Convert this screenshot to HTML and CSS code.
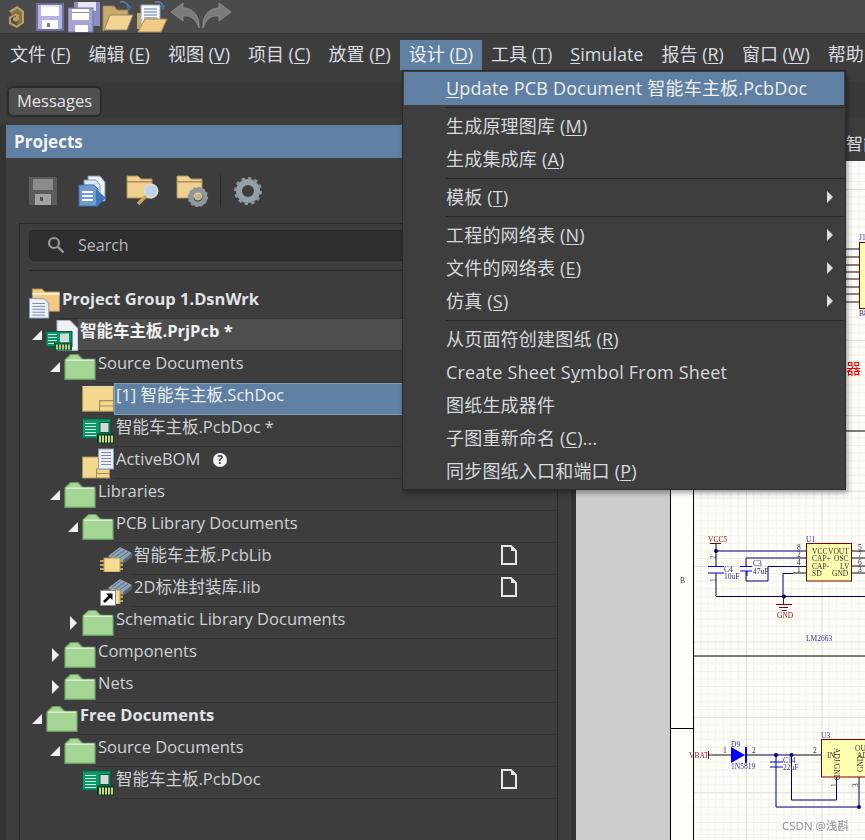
FILE: index.html
```html
<!DOCTYPE html>
<html lang="zh">
<head>
<meta charset="utf-8">
<title>Altium Designer</title>
<link rel="stylesheet" href="styles.css">
</head>
<body>
<svg class="defs" width="0" height="0" aria-hidden="true">
  <defs>
    <symbol id="i-logo" viewBox="0 0 16 22">
      <path d="M1 5 L9 0 L16 5 V17 L9 22 L1 18 V11 L8 7 L11 9 V14 L8 16 L5 14.5 V12 L8 10.5 L8 9.5 L3 12 V16.5 L9 19.5 L13.5 16 V6.5 L9 3 L3 7 Z" fill="#b79e66"/>
      <path d="M3 7 L9 3 L13.5 6.5 V16 L9 19.5 L9 17 L11 14 V9 L8 7 L3 9.5 Z" fill="#8a7342"/>
    </symbol>
    <symbol id="i-save" viewBox="0 0 28 28">
      <rect width="28" height="28" fill="#9f9fd2"/>
      <rect x="2" y="1" width="24" height="26" fill="#b4b4e0"/>
      <rect x="5" y="1" width="18" height="12" fill="#fff"/>
      <rect x="5" y="1" width="18" height="3" fill="#e4e4f4"/>
      <rect x="6" y="17" width="16" height="11" fill="#fff"/>
      <rect x="11" y="20" width="3" height="4" fill="#77779f"/>
      <path d="M0 0H28V28H0Z M2 2V26H26V2Z" fill="#6f6fa8" fill-rule="evenodd"/>
    </symbol>
    <symbol id="i-saveall" viewBox="0 0 32 32">
      <rect x="6" y="1" width="26" height="24" fill="#8e8ec6"/>
      <rect x="10" y="1" width="18" height="9" fill="#e6e6f6"/>
      <rect x="0" y="7" width="25" height="24" fill="#a4a4d6" stroke="#6f6fa8"/>
      <rect x="4" y="8" width="17" height="11" fill="#fff"/>
      <rect x="4" y="11" width="17" height="1" fill="#8a8aa8"/>
      <rect x="7" y="24" width="13" height="7" fill="#fff"/>
    </symbol>
    <symbol id="i-open" viewBox="0 0 32 32">
      <path d="M1 5H12L15 9H26V16H8L2 30H1Z" fill="#c8ab6c" stroke="#96815a"/>
      <path d="M8 14H31L25 29H2Z" fill="#f2d595" stroke="#9a8458"/>
      <path d="M18 1 C23 0 26 3 27 6" fill="none" stroke="#5d87ad" stroke-width="1.5"/>
      <path d="M24 5H30L27 10Z" fill="#3f6f9f"/>
    </symbol>
    <symbol id="i-opendoc" viewBox="0 0 32 32">
      <path d="M1 12H5V28H1Z" fill="#c8a76a"/>
      <path d="M5 4H24V24H5Z" fill="#f6f8fb" stroke="#9ba6b8"/>
      <path d="M8 8H21M8 11H21M8 14H21M8 17H21" stroke="#5878a8"/>
      <path d="M9 18H31L25 31H2Z" fill="#f3c987" stroke="#a88a58"/>
      <path d="M19 1 C24 0 26 2 27 5" fill="none" stroke="#5d87ad" stroke-width="1.5"/>
      <path d="M24 4H30L27 9Z" fill="#3f6f9f"/>
    </symbol>
    <symbol id="i-undo" viewBox="0 0 30 26">
      <path d="M13 1 L1 10 L13 19 V14 C21 13 26 17 29 26 C30 14 23 6 13 6Z" fill="#7b7b7b" stroke="#8c8c8c"/>
    </symbol>
    <symbol id="i-redo" viewBox="0 0 30 26">
      <path d="M17 1 L29 10 L17 19 V14 C9 13 4 17 1 26 C0 14 7 6 17 6Z" fill="#7b7b7b" stroke="#8c8c8c"/>
    </symbol>
    <symbol id="i-psave" viewBox="0 0 28 28">
      <rect width="28" height="28" fill="#5b5b5b"/>
      <rect x="4" y="2" width="20" height="11" fill="#8b8b8b"/>
      <rect x="6" y="17" width="16" height="11" fill="#a2a2a2"/>
      <rect x="11" y="20" width="3" height="4" fill="#555"/>
    </symbol>
    <symbol id="i-pdocs" viewBox="0 0 30 32">
      <path d="M10 1H22L27 7V26H10Z" fill="#eef2f8" stroke="#7e93b5"/>
      <path d="M6 5H18L22 10V28H6Z" fill="#dfe7f2" stroke="#7e93b5"/>
      <path d="M1 10H16L20 14V31H1Z" fill="#6f9bd0" stroke="#3f6ea8"/>
      <path d="M4 17H15M4 21H15M4 25H15" stroke="#fff" stroke-width="2"/>
      <path d="M18 14L28 23L18 32Z" fill="#3f78bd"/>
    </symbol>
    <symbol id="i-pfsearch" viewBox="0 0 34 32">
      <path d="M1 1H12L15 4H26V23H1Z" fill="#efd08f" stroke="#a88f5d"/>
      <rect x="1" y="6" width="25" height="1.5" fill="#a88f5d"/>
      <circle cx="25" cy="16" r="6.5" fill="#bcd2e6" stroke="#d8d8d8" stroke-width="2"/>
      <path d="M20 21 L12 29" stroke="#c6a263" stroke-width="3.5"/>
    </symbol>
    <symbol id="i-pfgear" viewBox="0 0 34 32">
      <path d="M1 1H12L15 4H26V23H1Z" fill="#efd08f" stroke="#a88f5d"/>
      <rect x="1" y="6" width="25" height="1.5" fill="#a88f5d"/>
      <circle cx="22" cy="22" r="7" fill="none" stroke="#8d979d" stroke-width="5"/>
      <circle cx="22" cy="22" r="9.2" fill="none" stroke="#8d979d" stroke-width="2" stroke-dasharray="2.4 2.4"/>
      <circle cx="22" cy="22" r="3.5" fill="#c8b588"/>
    </symbol>
    <symbol id="i-gear" viewBox="0 0 28 28">
      <circle cx="14" cy="14" r="9" fill="none" stroke="#95a0a6" stroke-width="6"/>
      <circle cx="14" cy="14" r="12.5" fill="none" stroke="#8b969c" stroke-width="3" stroke-dasharray="3.4 3.1"/>
    </symbol>
    <symbol id="i-search" viewBox="0 0 18 18">
      <circle cx="7" cy="7" r="5" fill="none" stroke="#9a9a9a" stroke-width="2.2"/>
      <path d="M11 11 L16.5 16.5" stroke="#9a9a9a" stroke-width="2.4"/>
    </symbol>
    <symbol id="i-group" viewBox="0 0 32 32">
      <path d="M4 1H14L17 4H32V24H4Z" fill="#f4c985" stroke="#a98a5c"/>
      <path d="M4 6H32" stroke="#fff2cf" stroke-width="2"/>
      <path d="M1 11H16L21 16V31H1Z" fill="#edf1f7" stroke="#8d9bb5"/>
      <path d="M4 16H17M4 19H17M4 22H17M4 25H17M4 28H17" stroke="#7b8aa8"/>
    </symbol>
    <symbol id="i-prj" viewBox="0 0 32 30">
      <path d="M11 0H24L32 8V30H11Z" fill="#eef1f7" stroke="#a8b4c8"/>
      <rect x="0" y="11" width="26" height="15" fill="#089466" stroke="#05583c"/>
      <path d="M2 14H11M2 17H11M2 20H11M2 23H11" stroke="#d8f4e6"/>
      <rect x="14" y="13" width="9" height="9" fill="#d4dcd8"/>
      <rect x="8" y="22" width="18" height="8" fill="#05583c"/>
      <path d="M11 24V29M14 24V29M17 24V29M20 24V29M23 24V29" stroke="#e8e28a" stroke-width="1.6"/>
    </symbol>
    <symbol id="i-folder" viewBox="0 0 30 25">
      <path d="M.5 24.5V5.5L6 .5H13L17.5 5H29.5V24.5Z" fill="#a6d695" stroke="#6d9a62"/>
      <path d="M1.5 6H28.5" stroke="#d6efca" stroke-width="1.5"/>
      <path d="M1 23.5H29" stroke="#8fbf80"/>
    </symbol>
    <symbol id="i-sch" viewBox="0 0 30 24">
      <rect x=".5" y=".5" width="29" height="23" fill="#f3d88e" stroke="#a59264"/>
      <path d="M.5 .5H29.5" stroke="#fff0c0"/>
      <path d="M16.5 23.5V13.5H29.5M16.5 18.5H29.5" fill="none" stroke="#a08a58"/>
    </symbol>
    <symbol id="i-pcb" viewBox="0 0 32 25">
      <rect x=".5" y=".5" width="28" height="19" fill="#0b9a6c" stroke="#056043"/>
      <path d="M3 5H14M3 8H14M3 11H14M3 14H14M3 17H14" stroke="#d8f4e6"/>
      <rect x="18" y="4" width="9" height="10" fill="#d4dcd8" stroke="#0a5a40"/>
      <rect x="15" y="15" width="17" height="10" fill="#043f2c"/>
      <path d="M18 17V24M21 17V24M24 17V24M27 17V24M30 17V24" stroke="#e8e28a" stroke-width="1.8"/>
    </symbol>
    <symbol id="i-bom" viewBox="0 0 32 30">
      <rect x=".5" y="8.5" width="27" height="21" fill="#f3d88e" stroke="#a59264"/>
      <path d="M14.5 29.5V20.5H27.5M14.5 25H27.5" fill="none" stroke="#a08a58"/>
      <rect x="16.5" y=".5" width="15" height="20" fill="#edf1f7" stroke="#8d9bb5"/>
      <path d="M19 4H29M19 7H29M19 10H29M19 13H29M19 16H29" stroke="#7b8aa8"/>
    </symbol>
    <symbol id="i-lib" viewBox="0 0 32 26">
      <path d="M8 10 L20 1 L32 7 L20 17Z" fill="#8ea3b8"/>
      <path d="M12 9L22 2M15 11L25 4M18 13L28 6" stroke="#5e7286"/>
      <path d="M20 17 L32 7 V11 L20 20Z" fill="#566a7c"/>
      <path d="M0 15H4M0 19H4M0 23H4M20 15H23M20 19H23M20 23H23" stroke="#c9a34e" stroke-width="2"/>
      <rect x="4" y="12" width="16" height="14" fill="#f5dc92" stroke="#b29a5a"/>
    </symbol>
    <symbol id="i-doc" viewBox="0 0 18 20">
      <path d="M2 1H11L16 6V19H2Z" fill="#3d3d3d" stroke="#e8e8e8" stroke-width="2"/>
      <path d="M11 1V6H16Z" fill="#e8e8e8"/>
    </symbol>
    <symbol id="i-shortcut" viewBox="0 0 16 16">
      <rect width="16" height="16" fill="#fff"/>
      <rect x=".5" y=".5" width="15" height="15" fill="none" stroke="#888"/>
      <path d="M4 12 L10 6" stroke="#000" stroke-width="2.6"/>
      <path d="M6 3.5H12.5V10Z" fill="#000"/>
    </symbol>
    <pattern id="grid" patternUnits="userSpaceOnUse" x="670.6" y="189" width="75.4" height="75.4">
      <path d="M7.54 0V75.4M15.08 0V75.4M22.62 0V75.4M30.16 0V75.4M37.7 0V75.4M45.24 0V75.4M52.78 0V75.4M60.32 0V75.4M67.86 0V75.4M0 7.54H75.4M0 15.08H75.4M0 22.62H75.4M0 30.16H75.4M0 37.7H75.4M0 45.24H75.4M0 52.78H75.4M0 60.32H75.4M0 67.86H75.4" stroke="#f1efe9" stroke-width="1"/>
      <path d="M.5 0V75.4M0 .5H75.4" stroke="#dfddd7" stroke-width="1"/>
    </pattern>
  </defs>
</svg>

<header class="toolbar">
  <svg class="tb-logo"><use href="#i-logo"/></svg>
  <svg class="tb-save"><use href="#i-save"/></svg>
  <svg class="tb-icon"><use href="#i-saveall"/></svg>
  <svg class="tb-icon"><use href="#i-open"/></svg>
  <svg class="tb-icon"><use href="#i-opendoc"/></svg>
  <svg class="tb-undo"><use href="#i-undo"/></svg>
  <svg class="tb-undo"><use href="#i-redo"/></svg>
</header>

<nav class="menubar">
  <span class="mb-item">文件 (<u>F</u>)</span>
  <span class="mb-item">编辑 (<u>E</u>)</span>
  <span class="mb-item">视图 (<u>V</u>)</span>
  <span class="mb-item">项目 (<u>C</u>)</span>
  <span class="mb-item">放置 (<u>P</u>)</span>
  <span class="mb-item mb-active">设计 (<u>D</u>)</span>
  <span class="mb-item">工具 (<u>T</u>)</span>
  <span class="mb-item"><u>S</u>imulate</span>
  <span class="mb-item">报告 (<u>R</u>)</span>
  <span class="mb-item">窗口 (<u>W</u>)</span>
  <span class="mb-item">帮助</span>
</nav>

<div class="strip"><div class="strip-inner"><button class="msg-btn">Messages</button></div></div>

<main class="workspace">
  <section class="panel">
    <h2 class="panel-head">Projects</h2>
    <div class="panel-tools">
      <svg class="pt-save"><use href="#i-psave"/></svg>
      <svg class="pt-docs"><use href="#i-pdocs"/></svg>
      <svg class="pt-folder"><use href="#i-pfsearch"/></svg>
      <svg class="pt-folder"><use href="#i-pfgear"/></svg>
      <span class="pt-sep"></span>
      <svg class="pt-save"><use href="#i-gear"/></svg>
    </div>
    <div class="frame">
      <div class="searchbox"><svg class="search-icon"><use href="#i-search"/></svg><span>Search</span></div>
      <div class="rule"></div>
      <ul class="tree">
        <li class="row lv0"><span class="slot0"></span><svg class="ico ico-tall"><use href="#i-group"/></svg><span class="label bold">Project Group 1.DsnWrk</span></li>
        <li class="row lv1"><span class="arrow down"></span><svg class="ico ico-tall"><use href="#i-prj"/></svg><span class="label bold hot">智能车主板.PrjPcb *</span></li>
        <li class="row lv2"><span class="arrow down"></span><svg class="ico"><use href="#i-folder"/></svg><span class="label">Source Documents</span></li>
        <li class="row lv3"><span class="arrow"></span><svg class="ico"><use href="#i-sch"/></svg><span class="label sel">[1] 智能车主板.SchDoc</span></li>
        <li class="row lv3"><span class="arrow"></span><svg class="ico"><use href="#i-pcb"/></svg><span class="label">智能车主板.PcbDoc *</span></li>
        <li class="row lv3"><span class="arrow"></span><svg class="ico ico-tall"><use href="#i-bom"/></svg><span class="label">ActiveBOM<b class="help">?</b></span></li>
        <li class="row lv2"><span class="arrow down"></span><svg class="ico"><use href="#i-folder"/></svg><span class="label">Libraries</span></li>
        <li class="row lv3"><span class="arrow down"></span><svg class="ico"><use href="#i-folder"/></svg><span class="label">PCB Library Documents</span></li>
        <li class="row lv4"><span class="arrow"></span><svg class="ico"><use href="#i-lib"/></svg><span class="label">智能车主板.PcbLib<svg class="file"><use href="#i-doc"/></svg></span></li>
        <li class="row lv4"><span class="arrow"></span><span class="ico-wrap"><svg class="ico"><use href="#i-lib"/></svg><svg class="shortcut"><use href="#i-shortcut"/></svg></span><span class="label">2D标准封装库.lib<svg class="file"><use href="#i-doc"/></svg></span></li>
        <li class="row lv3"><span class="arrow right"></span><svg class="ico"><use href="#i-folder"/></svg><span class="label">Schematic Library Documents</span></li>
        <li class="row lv2"><span class="arrow right"></span><svg class="ico"><use href="#i-folder"/></svg><span class="label">Components</span></li>
        <li class="row lv2"><span class="arrow right"></span><svg class="ico"><use href="#i-folder"/></svg><span class="label">Nets</span></li>
        <li class="row lv1"><span class="arrow down"></span><svg class="ico"><use href="#i-folder"/></svg><span class="label bold">Free Documents</span></li>
        <li class="row lv2"><span class="arrow down"></span><svg class="ico"><use href="#i-folder"/></svg><span class="label">Source Documents</span></li>
        <li class="row lv3"><span class="arrow"></span><svg class="ico"><use href="#i-pcb"/></svg><span class="label">智能车主板.PcbDoc<svg class="file"><use href="#i-doc"/></svg></span></li>
      </ul>
    </div>
  </section>

  <section class="doc">
    <div class="doc-tab">智能车主板.SchDoc</div>
    <svg class="sheet" viewBox="576 161 289 679">
      <rect x="576" y="161" width="94" height="679" fill="#cccccc"/>
      <rect x="670" y="161" width="195" height="679" fill="#fffdf8"/>
      <rect x="693" y="161" width="172" height="679" fill="url(#grid)"/>
      <g class="frame-lines">
        <path d="M670.5 161V840M693.5 161V840M670 431H865M693 656H865M670 728.5H693"/>
      </g>
      <text class="zone" x="680" y="583">B</text>

      <g class="wires-black">
        <path d="M846 249H859M846 257H859M846 265H859M846 272H859M846 279H859M846 287H859M846 294H859M846 302H859"/>
        <path d="M716 543V551M716 573V596M716 551V566M793 573H806M852 551H865M852 558H865M852 566H865M852 573H865"/>
        <path d="M712 755H731M746 755H760M795 755H821M836.5 777V786M859 777V786"/>
      </g>
      <g class="wires-blue">
        <path d="M716 551H806M746 558H806V558M746 558V566M768 566.5H806M768 566.5V581H746V571M783 573.5H793M783 573.5V596.5M716 596.5H865"/>
        <path d="M760 755H795M776 755V807H859M791.5 755V800H836.5V786M859 786V807"/>
      </g>
      <g class="caps">
        <path d="M708 566.5H724M708 573H724M740 566.5H752M740 571H752M747 571V576M770 762H783M770 767H783"/>
      </g>
      <circle class="dot" cx="716" cy="551" r="2"/>
      <circle class="dot" cx="784" cy="596.5" r="2"/>
      <circle class="dot" cx="776" cy="755" r="2"/>
      <circle class="dot" cx="791.5" cy="755" r="2"/>
      <circle class="dot" cx="859" cy="807" r="2"/>
      <path class="redline" d="M710 543.5H721M708.5 751V759M708 755H712M783.5 596V604M776 604.5H792M779 607.5H788M781.5 610.5H786.5"/>
      <path class="diode" d="M731 747V763L745 755Z M745 747H747V763H745Z"/>
      <rect class="chip" x="806.5" y="543.5" width="45" height="37.5"/>
      <rect class="chip" x="821.5" y="739.5" width="60" height="37.5"/>
      <rect class="chip" x="859.5" y="242.5" width="20" height="66"/>

      <g class="t-red">
        <text x="708" y="541.5">VCC5</text>
        <text x="777" y="618">GND</text>
        <text x="689" y="757.5">VBAT</text>
      </g>
      <g class="t-blue">
        <text x="806" y="541.5">U1</text>
        <text x="806" y="640.5">LM2663</text>
        <text x="724" y="572">C4</text>
        <text x="724" y="579">10uF</text>
        <text x="753" y="565.5">C3</text>
        <text x="753" y="573.5">47uF</text>
        <text x="731" y="746.5">D9</text>
        <text x="731" y="768.5">1N5819</text>
        <text x="783" y="762.5">C14</text>
        <text x="783" y="769.5">22uF</text>
        <text x="821" y="737.5">U3</text>
        <text x="859" y="240">J1</text>
        <text x="859" y="316">B8</text>
      </g>
      <g class="t-black">
        <text x="812" y="553.5">VCC</text><text x="828" y="553.5">VOUT</text>
        <text x="812" y="561">CAP+</text><text x="834" y="561">OSC</text>
        <text x="812" y="568.5">CAP-</text><text x="840" y="568.5">LV</text>
        <text x="812" y="576">SD</text><text x="832" y="576">GND</text>
        <text x="797" y="550">8</text><text x="797" y="557">2</text><text x="797" y="565">4</text><text x="797" y="572">1</text>
        <text x="858" y="550">5</text><text x="858" y="557">7</text><text x="858" y="565">6</text><text x="858" y="572">3</text>
        <text x="723" y="753">1</text><text x="752" y="753">2</text><text x="813" y="753">2</text>
        <text x="827" y="757.5">IN</text><text x="855" y="750.5">OUT</text><text x="857" y="757.5">AD</text>
        <text transform="rotate(-90 716 559)" x="716" y="559">2</text>
        <text transform="rotate(-90 716 582)" x="716" y="582">1</text>
        <text transform="rotate(-90 837 787)" x="837" y="787">1</text>
        <text transform="rotate(-90 858 787)" x="858" y="787">3</text>
        <text transform="rotate(90 834 748)" x="834" y="748">ADJ/GND</text>
        <text transform="rotate(-90 863 772)" x="863" y="772">GND</text>
      </g>
      <text class="t-alert" x="846" y="374">器</text>
      <text class="watermark" x="782" y="830">CSDN @浅斟</text>
    </svg>
  </section>
</main>

<div class="dropdown">
  <div class="dd-item dd-hot"><u>U</u>pdate PCB Document 智能车主板.PcbDoc</div>
  <div class="dd-sep"></div>
  <div class="dd-item">生成原理图库 (<u>M</u>)</div>
  <div class="dd-item">生成集成库 (<u>A</u>)</div>
  <div class="dd-sep"></div>
  <div class="dd-item dd-sub">模板 (<u>T</u>)</div>
  <div class="dd-sep"></div>
  <div class="dd-item dd-sub">工程的网络表 (<u>N</u>)</div>
  <div class="dd-item dd-sub">文件的网络表 (<u>E</u>)</div>
  <div class="dd-item dd-sub">仿真 (<u>S</u>)</div>
  <div class="dd-sep"></div>
  <div class="dd-item">从页面符创建图纸 (<u>R</u>)</div>
  <div class="dd-item">Create Sheet S<u>y</u>mbol From Sheet</div>
  <div class="dd-item">图纸生成器件</div>
  <div class="dd-item">子图重新命名 (<u>C</u>)...</div>
  <div class="dd-item">同步图纸入口和端口 (<u>P</u>)</div>
</div>
</body>
</html>
```
FILE: styles.css
```css
* { box-sizing: border-box; }
html, body { margin: 0; padding: 0; }
body {
  position: relative;
  width: 865px;
  height: 840px;
  overflow: hidden;
  display: flex;
  flex-direction: column;
  background: #3d3d3d;
  color: #d9dde2;
  font-family: "Open Sans", "Noto Sans CJK SC", sans-serif;
  font-size: 17px;
}
.defs { position: absolute; }
svg { display: block; flex: none; }

/* top toolbar */
.toolbar {
  height: 34px;
  flex: none;
  display: flex;
  align-items: center;
  padding-left: 8px;
  background: #4b4b4b;
  border-bottom: 1px solid #333;
}
.tb-logo { width: 16px; height: 22px; margin-right: 12px; }
.tb-save { width: 28px; height: 28px; margin-right: 4px; }
.tb-icon { width: 32px; height: 32px; margin-right: 2px; }
.tb-undo { width: 30px; height: 26px; margin-right: 2px; margin-top: -4px; }

/* menu bar */
.menubar {
  height: 42px;
  flex: none;
  display: flex;
  align-items: flex-start;
  padding: 6px 0 0 1px;
  background: #3d3d3d;
  font-size: 18px;
  white-space: nowrap;
}
.mb-item { height: 30px; line-height: 29px; padding: 0 9px; }
.mb-active { background: #5f80a2; color: #f0f3f6; }
u { text-underline-offset: 2px; text-decoration-thickness: 1px; }

/* messages strip */
.strip {
  height: 42px;
  flex: none;
  padding: 6px 0 0 6px;
  background: #3d3d3d;
}
.strip-inner {
  height: 36px;
  padding: 4px 0 0 1px;
  background: #393939;
}
.msg-btn {
  display: block;
  width: 95px;
  height: 31px;
  padding: 0 0 2px;
  background: #4e4e4e;
  border: 2px solid #2b2b2b;
  border-radius: 6px;
  color: #e2e5e8;
  font: 16.5px "Open Sans", sans-serif;
}

/* workspace */
.workspace { flex: 1; display: flex; min-height: 0; }
.panel {
  width: 576px;
  flex: none;
  padding: 7px 0 0 6px;
  display: flex;
  flex-direction: column;
  background:
    linear-gradient(#3d3d3d 7px, transparent 7px),
    linear-gradient(90deg, #333 6px, #3d3d3d 6px);
  border-right: 5px solid #333;
}
.panel-head {
  margin: 0;
  height: 33px;
  line-height: 33px;
  padding-left: 8px;
  background: #5f80a2;
  color: #f2f4f7;
  font-size: 17px;
  font-weight: 700;
}
.panel-tools {
  height: 65px;
  flex: none;
  display: flex;
  align-items: center;
  padding-left: 23px;
}
.pt-save { width: 28px; height: 28px; margin-right: 21px; }
.pt-docs { width: 30px; height: 32px; margin-right: 18px; }
.pt-folder { width: 34px; height: 32px; margin-right: 16px; }
.pt-sep { width: 1px; height: 32px; background: #2b2b2b; margin: 0 13px 0 -6px; }
.frame {
  flex: 1;
  margin-left: 13px;
  width: 539px;
  padding: 6px 0 0 9px;
  border-top: 1px solid #2a2a2a;
  border-left: 1px solid #2a2a2a;
  border-right: 1px solid #2a2a2a;
}
.searchbox {
  height: 31px;
  display: flex;
  align-items: center;
  padding: 0 0 1px 17px;
  background: #2f2f2f;
  border: 1px solid #292929;
  border-radius: 5px;
  color: #b4b8bc;
  font-size: 16px;
}
.search-icon { width: 18px; height: 18px; margin-right: 13px; }
.rule { height: 1px; margin-top: 9px; background: #2a2a2a; }

/* project tree */
.tree { list-style: none; margin: 16px 0 0 -9px; padding: 0; }
.row { height: 32px; display: flex; align-items: center; }
.lv0 { padding-left: 0; }
.lv1 { padding-left: 10px; }
.lv2 { padding-left: 28px; }
.lv3 { padding-left: 46px; }
.lv4 { padding-left: 64px; }
.slot0 { width: 8px; flex: none; }
.arrow { width: 16px; height: 16px; flex: none; position: relative; }
.arrow.down::after {
  content: "";
  position: absolute;
  left: 2px;
  top: 3px;
  border-style: solid;
  border-width: 0 0 10px 10px;
  border-color: transparent transparent #f0f0f0 transparent;
}
.arrow.right::after {
  content: "";
  position: absolute;
  left: 4px;
  top: 1px;
  border-style: solid;
  border-width: 7px 0 7px 7px;
  border-color: transparent transparent transparent #f0f0f0;
}
.ico, .ico-wrap { width: 32px; height: 26px; flex: none; }
.ico-tall { height: 31px; }
.ico-wrap { position: relative; display: block; }
.shortcut { position: absolute; left: 0; top: 12px; width: 16px; height: 16px; }
.label {
  position: relative;
  flex: 1;
  height: 32px;
  padding-left: 2px;
  line-height: 24px;
  font-size: 16.5px;
  color: #cdd2d7;
  border-bottom: 1px solid #333;
  white-space: nowrap;
}
.bold { font-weight: 700; color: #e1e4e7; }
.hot { background: #4e4e4e; color: #f0f0f0; }
.sel { background: #5f80a2; border: 1px solid #86a0bb; color: #eef1f5; line-height: 22px; padding-left: 1px; }
.help {
  display: inline-block;
  width: 14px;
  height: 14px;
  margin-left: 13px;
  border-radius: 50%;
  background: #f2f2f2;
  color: #3d3d3d;
  font-size: 12px;
  line-height: 14px;
  text-align: center;
  vertical-align: 1px;
}
.file { position: absolute; left: 386px; top: 2px; width: 18px; height: 20px; }
.lv4 .file { left: 368px; }

/* document area */
.doc { flex: 1; min-width: 0; display: flex; flex-direction: column; }
.doc-tab {
  height: 43px;
  flex: none;
  padding: 14px 0 0 270px;
  background: #3c3c3c;
  font-size: 17px;
  line-height: 24px;
  white-space: nowrap;
  overflow: hidden;
}
.sheet { width: 289px; height: 679px; filter: blur(.3px); }
.frame-lines path { stroke: #000; stroke-width: 1; fill: none; }
.wires-black path { stroke: #111; stroke-width: 1; fill: none; }
.wires-blue path { stroke: #00007f; stroke-width: 1; fill: none; }
.caps path { stroke: #0000e0; stroke-width: 1; fill: none; }
.dot { fill: #00007f; }
.redline { stroke: #800000; stroke-width: 1; fill: none; }
.diode { fill: #0000ff; }
.chip { fill: #ffffb0; stroke: #800000; stroke-width: 1; }
.sheet text { font-family: "Liberation Serif", serif; font-size: 7.5px; }
.t-red text { fill: #8a2020; }
.t-blue text { fill: #30309a; }
.t-black text { fill: #333; }
.sheet .zone { fill: #333; font-size: 7.5px; }
.sheet .t-alert { fill: #ff0000; font-family: "Noto Sans CJK SC", sans-serif; font-size: 15px; }
.sheet .watermark { fill: #8f8f8f; font-family: "Open Sans", "Noto Sans CJK SC", sans-serif; font-size: 11.5px; }

/* design drop-down, floats over the page */
.dropdown {
  position: absolute;
  left: 402px;
  top: 70px;
  width: 444px;
  height: 420px;
  padding: 1px 1px;
  background: #3e3e3e;
  border: 1px solid #2a2a2a;
  box-shadow: 2px 3px 5px rgba(0, 0, 0, .35);
  font-size: 18px;
  letter-spacing: .2px;
}
.dd-item {
  position: relative;
  height: 33px;
  line-height: 33px;
  padding-left: 42px;
  color: #d5d9dd;
  white-space: nowrap;
}
.dd-hot { background: #5f80a2; color: #eef1f5; }
.dd-sep { height: 1px; margin: 2px 0 2px 42px; background: #2a2a2a; }
.dd-sub::after {
  content: "";
  position: absolute;
  right: 11px;
  top: 10px;
  border-style: solid;
  border-width: 6px 0 6px 6px;
  border-color: transparent transparent transparent #dcdcdc;
}
```
